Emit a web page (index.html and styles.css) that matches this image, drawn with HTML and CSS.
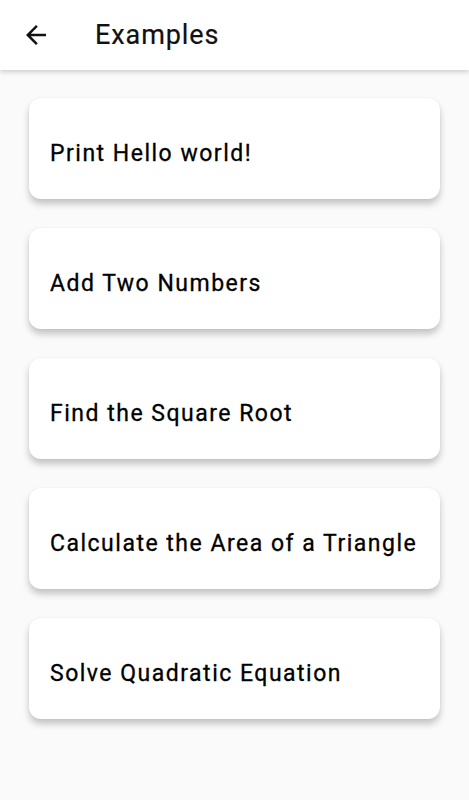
FILE: index.html
```html
<!DOCTYPE html>
<html lang="en">
<head>
  <meta charset="UTF-8" />
  <title>Examples</title>
  <link rel="stylesheet" href="styles.css">
</head>
<body>
  <!-- app bar -->
  <header class="app-bar">
    <button class="back-btn" aria-label="Back">
      <svg viewBox="0 0 24 24" width="30" height="30">
        <path d="M20 11H7.83l5.59-5.59L12 4l-8 8 8 8 1.41-1.41L7.83 13H20v-2z" fill="#111"/>
      </svg>
    </button>
    <h1 class="title">Examples</h1>
  </header>

  <!-- example list -->
  <main class="list">
    <div class="card">Print Hello world!</div>
    <div class="card">Add Two Numbers</div>
    <div class="card">Find the Square Root</div>
    <div class="card">Calculate the Area of a Triangle</div>
    <div class="card">Solve Quadratic Equation</div>
  </main>
</body>
</html>
```

FILE: styles.css
```css
* {
  box-sizing: border-box;
}

body {
  margin: 0;
  font-family: Roboto, "Noto Sans", sans-serif;
  background-color: #fafafa;
  color: #000;
}

.app-bar {
  position: relative;
  z-index: 2;
  height: 70px;
  display: flex;
  align-items: center;
  background-color: #fff;
  box-shadow: 0 2px 5px rgba(0, 0, 0, 0.18);
}

.back-btn {
  width: 30px;
  height: 30px;
  margin-left: 21px;
  padding: 0;
  border: none;
  background: none;
  display: flex;
}

.title {
  margin: 0 0 0 44px;
  font-size: 27px;
  font-weight: 400;
  letter-spacing: 0.9px;
  color: #111;
  -webkit-text-stroke: 0.2px #111;
}

.list {
  height: 660px;
  overflow: hidden;
  padding: 28px 29px 0;
  display: flex;
  flex-direction: column;
  gap: 29px;
}

.card {
  flex: none;
  height: 101px;
  display: flex;
  align-items: center;
  padding: 10px 21px 0;
  background-color: #fff;
  border-radius: 12px;
  box-shadow: 0 5px 7px rgba(0, 0, 0, 0.22), 0 0 2px rgba(0, 0, 0, 0.06);
  font-size: 23px;
  font-weight: 400;
  letter-spacing: 1.5px;
  color: #000;
  -webkit-text-stroke: 0.3px #000;
}
```
